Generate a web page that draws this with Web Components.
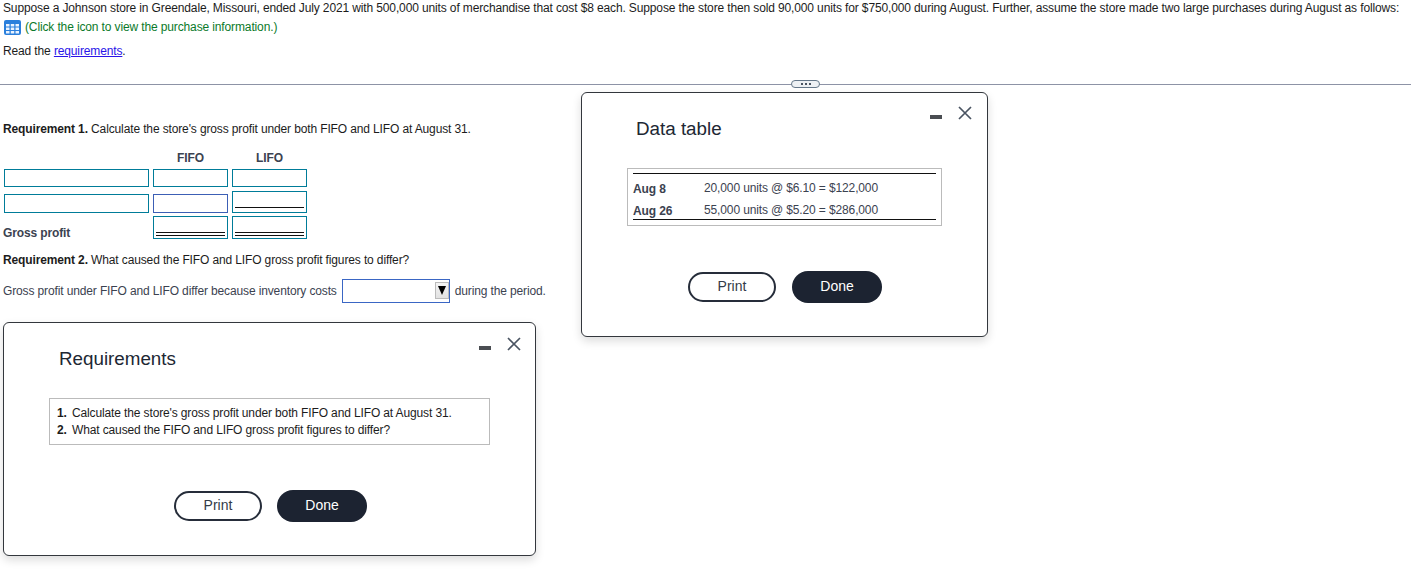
<!DOCTYPE html>
<html lang="en">
<head>
<meta charset="utf-8">
<title>Requirements</title>
<style>
  html,body{margin:0;background:#fff}
  body{font:12px/14px "Liberation Sans",Arial,sans-serif;letter-spacing:-.13px;color:#1c1c1c;width:1411px;height:585px;overflow:hidden;position:relative}
  .win-req{left:3px;top:322px;width:533px;height:234px}
  .win-data{left:581px;top:92px;width:407px;height:245px}
  .req-list{margin:28px 0 0 45px;width:441px;height:47px;box-sizing:border-box;border:1px solid #bbb;padding:6px 7px;line-height:17px}
  .req-list b{display:inline-block;width:15px}
</style>
</head>
<body>
<question-page></question-page>

<pop-window class="win-req" heading="Requirements" head-x="55" head-y="25" ctl-right="14" ctl-top="14" foot-x="170" foot-y="167" foot-gap="15">
  <div class="req-list">
    <div><b>1.</b>Calculate the store's gross profit under both FIFO and LIFO at August 31.</div>
    <div><b>2.</b>What caused the FIFO and LIFO gross profit figures to differ?</div>
  </div>
</pop-window>

<pop-window class="win-data" heading="Data table" head-x="54" head-y="25" ctl-right="15" ctl-top="13" foot-x="106" foot-y="178" foot-gap="16">
  <data-table style="margin:28px 0 0 45px"></data-table>
</pop-window>

<script>
// kolory i drobiazgi wspolne
const TEAL='#007c99';

customElements.define('pill-button', class extends HTMLElement{
  constructor(){
    super(); this.attachShadow({mode:'open'});
    this.shadowRoot.innerHTML=`
      <style>
        :host{display:block;box-sizing:border-box;font:14px/1 "Liberation Sans",Arial,sans-serif;letter-spacing:0;border-radius:16px;text-align:center}
        :host([kind=print]){width:88px;height:30px;margin-top:1px;border:2px solid #262d3a;color:#333b48;line-height:25px;background:#fff}
        :host([kind=done]){width:90px;height:32px;background:#1c2331;color:#fff;line-height:30px}
      </style><slot></slot>`;
  }
});

customElements.define('pop-window', class extends HTMLElement{
  constructor(){ super(); this.attachShadow({mode:'open'}); }
  connectedCallback(){
    const a=n=>this.getAttribute(n);
    this.shadowRoot.innerHTML=`
      <style>
        :host{display:block;position:absolute;box-sizing:border-box;background:#fff;border:1px solid #33373d;border-radius:6px;box-shadow:0 4px 10px rgba(0,0,0,.14)}
        h2{margin:0;font:400 18.8px/22px "Liberation Sans",Arial,sans-serif;letter-spacing:0;color:#202733;padding:${a('head-y')}px 0 0 ${a('head-x')}px}
        .ctl{position:absolute;top:${a('ctl-top')}px;right:${a('ctl-right')}px;display:flex;align-items:center;gap:16px}
        .min{width:12px;height:4px;background:#4a4d52;margin-top:8px}
        svg{display:block}
        .foot{position:absolute;left:${a('foot-x')}px;top:${a('foot-y')}px;display:flex;gap:${a('foot-gap')}px}
      </style>
      <h2>${a('heading')}</h2>
      <div class="ctl"><div class="min"></div>
        <svg width="14" height="14" viewBox="0 0 14 14"><path d="M1 1L13 13M13 1L1 13" stroke="#4a5462" stroke-width="1.7" fill="none"/></svg>
      </div>
      <slot></slot>
      <div class="foot"><pill-button kind="print">Print</pill-button><pill-button kind="done">Done</pill-button></div>`;
  }
});

customElements.define('data-table', class extends HTMLElement{
  constructor(){
    super(); this.attachShadow({mode:'open'});
    this.shadowRoot.innerHTML=`
      <style>
        :host{display:block;box-sizing:border-box;width:315px;height:58px;border:1px solid #bbb;padding:4px 5px 0 5px;color:#3b4250}
        .in{border-top:1px solid #111;border-bottom:1px solid #111;height:47px;padding-top:7px;box-sizing:border-box;display:grid;grid-template-columns:71px 1fr;grid-auto-rows:22px;line-height:14px}
        b{position:relative;top:1px}
      </style>
      <div class="in">
        <b>Aug 8</b><span>20,000 units @ $6.10 = $122,000</span>
        <b>Aug 26</b><span>55,000 units @ $5.20 = $286,000</span>
      </div>`;
  }
});

customElements.define('answer-box', class extends HTMLElement{
  constructor(){
    super(); this.attachShadow({mode:'open'});
    this.shadowRoot.innerHTML=`
      <style>
        :host{display:block;box-sizing:border-box;border:1px solid ${TEAL};background:#fff;position:relative}
        :host([focus]){border-color:#3c5fb5}
        :host([rule])::after,:host([rule=double])::before{content:"";position:absolute;left:2px;right:2px;height:1px;background:#111}
        :host([rule=single])::after{bottom:4px}
        :host([rule=double])::after{bottom:2px}
        :host([rule=double])::before{bottom:5px}
      </style>`;
  }
});

customElements.define('profit-grid', class extends HTMLElement{
  constructor(){
    super(); this.attachShadow({mode:'open'});
    this.shadowRoot.innerHTML=`
      <style>
        :host{display:grid;grid-template-columns:145px 75px 75px;column-gap:4px;margin-left:4px;color:#3b4250}
        .h{font-weight:700;text-align:center;height:18px;line-height:14px}
        .lab{margin-left:-1px;align-self:end;line-height:14px;font-weight:700;position:relative;top:1px}
      </style>
      <div></div><div class="h">FIFO</div><div class="h">LIFO</div>
      <answer-box style="height:18px"></answer-box>
      <answer-box style="height:18px"></answer-box>
      <answer-box style="height:18px"></answer-box>
      <answer-box style="height:19px;margin-top:7px"></answer-box>
      <answer-box style="height:19px;margin-top:7px" focus></answer-box>
      <answer-box style="height:22px;margin-top:4px" rule="single"></answer-box>
      <div class="lab" style="margin-top:3px">Gross profit</div>
      <answer-box style="height:23px;margin-top:3px" rule="double"></answer-box>
      <answer-box style="height:23px;margin-top:3px" rule="double"></answer-box>`;
  }
});

customElements.define('drop-select', class extends HTMLElement{
  constructor(){
    super(); this.attachShadow({mode:'open'});
    this.shadowRoot.innerHTML=`
      <style>
        :host{display:block;box-sizing:border-box;width:108px;height:24px;border:1px solid #3a66c4;position:relative;background:#fff}
        .btn{position:absolute;right:0;top:2px;width:14px;height:17px;box-sizing:border-box;background:linear-gradient(#f4f4f4,#e2e2e2);border:1px solid #bbb;display:flex;align-items:center;justify-content:center}
        .btn i{display:block;width:0;height:0;border-left:4.5px solid transparent;border-right:4.5px solid transparent;border-top:9px solid #000}
      </style><div class="btn"><i></i></div>`;
  }
});

customElements.define('question-page', class extends HTMLElement{
  constructor(){
    super(); this.attachShadow({mode:'open'});
    this.shadowRoot.innerHTML=`
      <style>
        :host{display:block;padding-top:1px}
        p{margin:0;white-space:nowrap}
        .intro{padding-left:3px}
        .hint{display:flex;align-items:center;gap:4px;color:#0b7a2a;margin-top:5px;padding-left:1px;height:14px}
        .hint svg{display:block;margin-left:3px}
        a{color:#2a14e8;text-decoration:underline}
        .rule{height:1px;background:#8d93a6;margin-top:26px;position:relative}
        .more{position:absolute;left:791px;top:-4px;width:29px;height:8px;box-sizing:border-box;border:1px solid #66788a;border-radius:5px;background:#eef1f4;display:flex;align-items:center;justify-content:center;gap:2px}
        .more i{width:2px;height:2px;background:#4a5462}
        .req{padding-left:3px}
        .pick{display:flex;align-items:center;padding-left:3px;margin-top:12px;color:#3b4250}
      </style>
      <p class="intro">Suppose a Johnson store in Greendale, Missouri, ended July 2021 with 500,000 units of merchandise that cost $8 each. Suppose the store then sold 90,000 units for $750,000 during August. Further, assume the store made two large purchases during August as follows:</p>
      <div class="hint">
        <svg width="17" height="15" viewBox="0 0 17 15"><rect width="17" height="15" rx="2" fill="#2a7fdc"/><path d="M2 4h3.500v2.500H2zM6.750 4h3.500v2.500h-3.500zM11.500 4H15v2.500h-3.500zM2 7.500h3.500V10H2zM6.750 7.500h3.500V10h-3.500zM11.500 7.500H15V10h-3.500zM2 11h3.500v2.500H2zM6.750 11h3.500v2.500h-3.500zM11.500 11H15v2.500h-3.500z" fill="#eaf3ff"/></svg>
        <span>(Click the icon to view the purchase information.)</span>
      </div>
      <p class="intro" style="margin-top:10px">Read the <a>requirements</a>.</p>
      <div class="rule"><div class="more"><i></i><i></i><i></i></div></div>
      <p class="req" style="margin-top:37px"><b>Requirement 1.</b> Calculate the store's gross profit under both FIFO and LIFO at August 31.</p>
      <profit-grid style="margin-top:15px"></profit-grid>
      <p class="req" style="margin-top:14px"><b>Requirement 2.</b> What caused the FIFO and LIFO gross profit figures to differ?</p>
      <div class="pick">
        <span>Gross profit under FIFO and LIFO differ because inventory costs</span>
        <drop-select style="margin:0 5px"></drop-select>
        <span>during the period.</span>
      </div>`;
  }
});
</script>
</body>
</html>
